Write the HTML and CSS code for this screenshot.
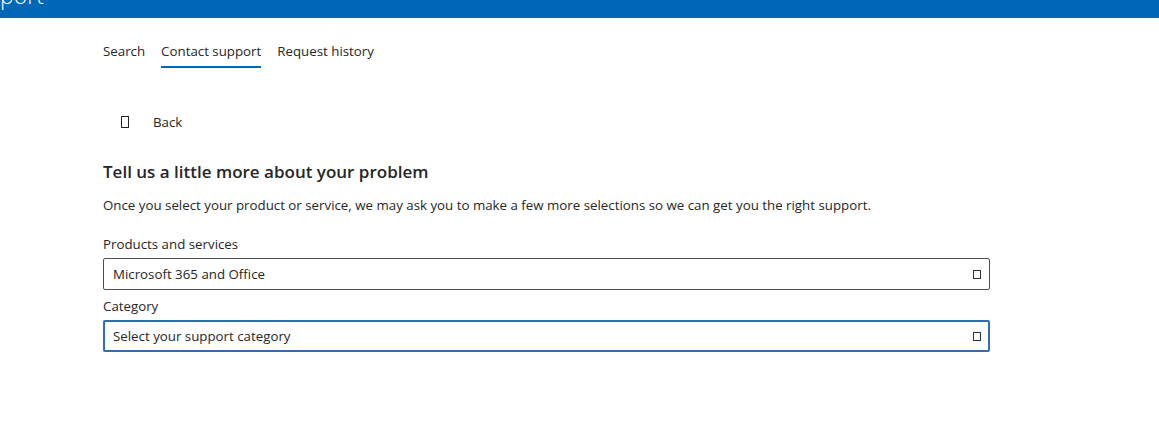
FILE: index.html
```html
<!DOCTYPE html>
<html lang="en">
<head>
<meta charset="utf-8">
<link rel="stylesheet" href="styles.css">
</head>
<body>
<header class="topbar"><span class="brand">port</span></header>
<main class="page">
  <nav class="tabs">
    <a class="tab">Search</a>
    <a class="tab active">Contact support</a>
    <a class="tab">Request history</a>
  </nav>
  <button class="back"><span class="glyph"></span><span>Back</span></button>
  <h1 class="title">Tell us a little more about your problem</h1>
  <p class="intro">Once you select your product or service, we may ask you to make a few more selections so we can get you the right support.</p>
  <label class="label">Products and services</label>
  <div class="select"><span>Microsoft 365 and Office</span><span class="glyph small"></span></div>
  <label class="label">Category</label>
  <div class="select focused"><span>Select your support category</span><span class="glyph small"></span></div>
</main>
</body>
</html>
```
FILE: styles.css
```css
* { box-sizing: border-box; }
html, body { margin: 0; padding: 0; background: #fff; }
body { font-family: "Open Sans", "Noto Sans", sans-serif; color: #262626; font-size: 13.3px; }
.topbar { height: 18px; background: #0067b8; overflow: hidden; }
.brand { display: block; color: #fff; font-size: 23px; font-weight: 300; line-height: 1; margin-top: -16px; }
.page { padding-left: 103px; width: 990px; }
.tabs { display: flex; gap: 16px; padding-top: 22px; }
.tab { display: block; padding: 2px 0 6px; border-bottom: 2px solid transparent; line-height: 18px; }
.tab.active { border-bottom-color: #0067b8; }
.back { display: flex; align-items: center; gap: 24px; border: 0; background: none; font: inherit; color: inherit; padding: 0 0 0 18px; margin-top: 44px; height: 20px; }
.glyph { display: inline-block; width: 8px; height: 12px; border: 1px solid #222; }
.glyph.small { width: 8px; height: 9px; border-color: #333; }
.title { font-size: 17px; font-weight: 600; margin: 28px 0 0; line-height: 24px; }
.intro { margin: 11px 0 0; line-height: 20px; }
.label { display: block; margin-top: 19px; line-height: 20px; }
.label + .select { margin-top: 4px; }
.select { display: flex; justify-content: space-between; align-items: center; height: 32px; border: 1px solid #505050; border-radius: 2px; padding: 0 8px 0 9px; }
.select + .label { margin-top: 6px; }
.select.focused { border: 2px solid #2f6fb0; padding: 0 7px 0 8px; }
```
